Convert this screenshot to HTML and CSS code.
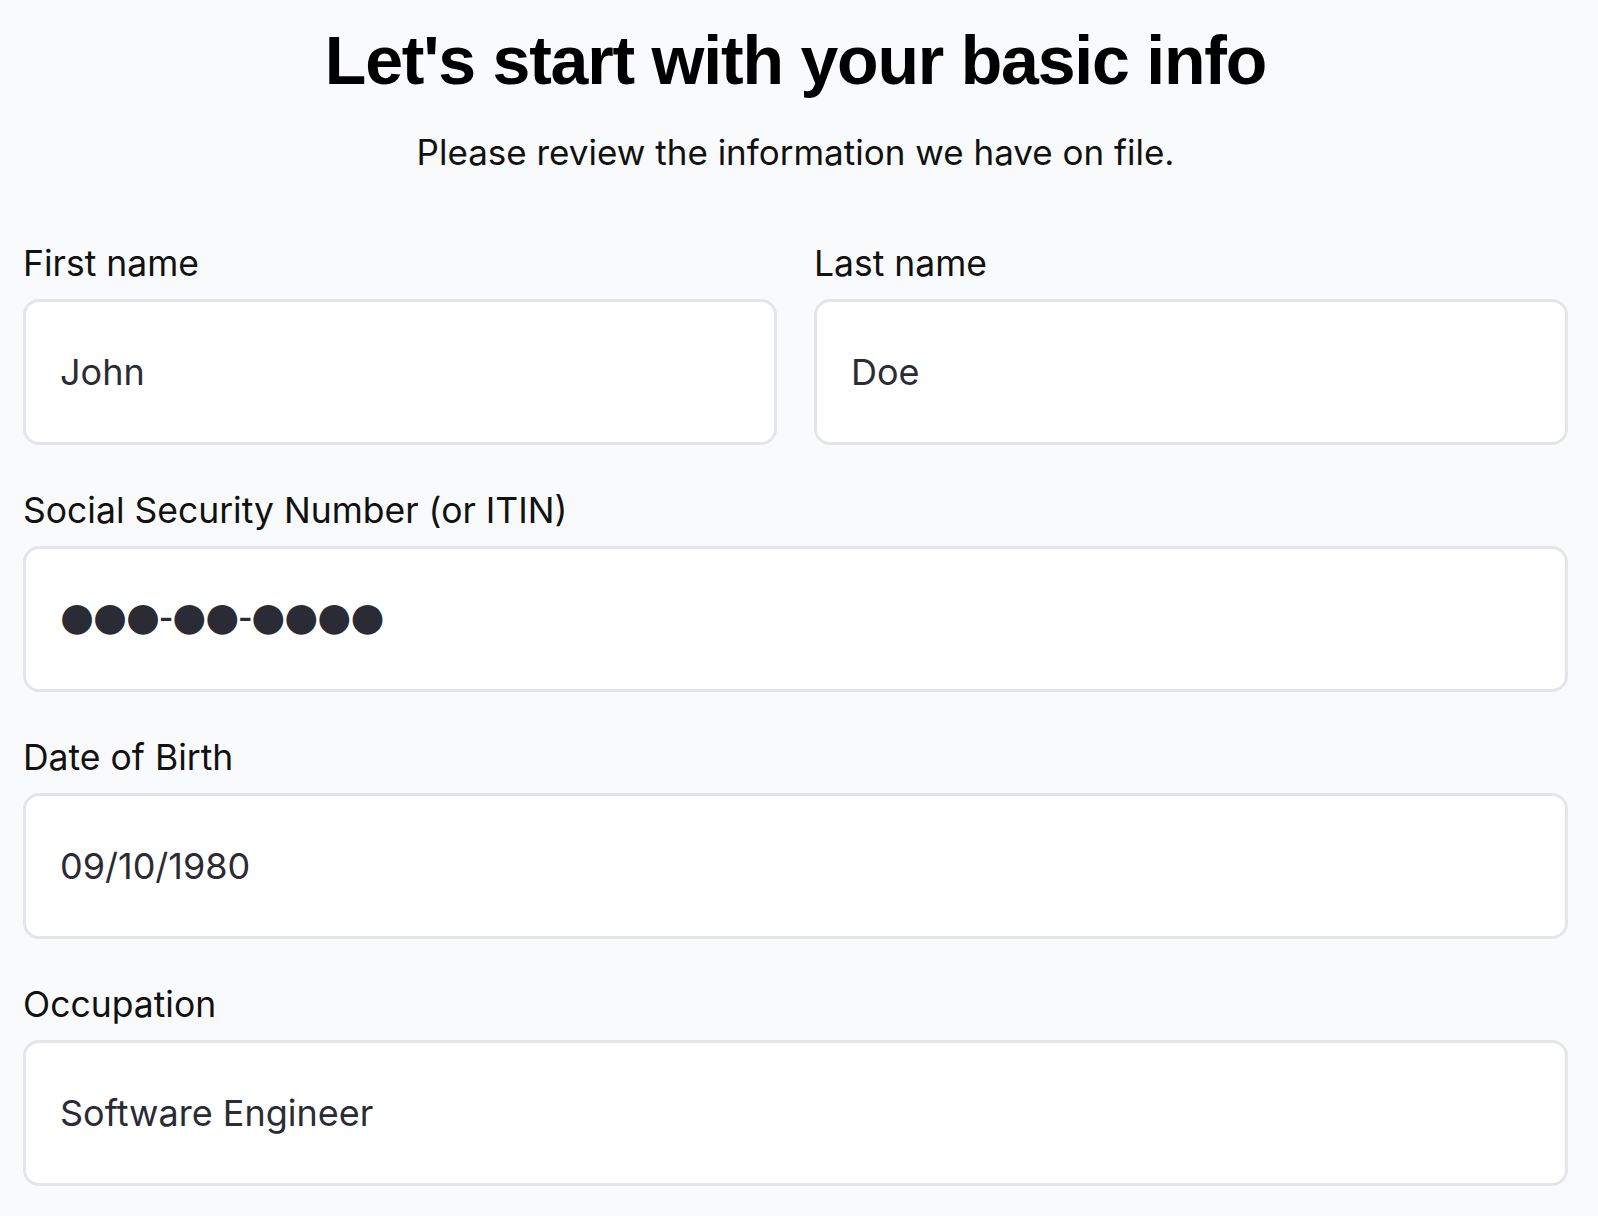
FILE: index.html
```html
<!DOCTYPE html>
<html lang="en">
<head>
    <meta charset="UTF-8">
    <meta name="viewport" content="width=device-width, initial-scale=1.0">
    <title>Basic Info</title>
    <link rel="stylesheet" href="styles.css">
</head>
<body>

<div class="container">
    <!-- Heading -->
    <div class="intro">
        <h1>Let's start with your basic info</h1>
        <p>Please review the information we have on file.</p>
    </div>

    <!-- Info Form -->
    <form class="info-form" id="infoForm">
        <div class="form-row">
            <div class="form-group">
                <label for="firstName">First name</label>
                <input type="text" id="firstName" value="John">
            </div>
            <div class="form-group">
                <label for="lastName">Last name</label>
                <input type="text" id="lastName" value="Doe">
            </div>
        </div>
        <div class="form-group">
            <label for="ssn">Social Security Number (or ITIN)</label>
            <div class="masked-field" id="ssn">●●●-●●-●●●●</div>
        </div>
        <div class="form-group">
            <label for="dob">Date of Birth</label>
            <input type="text" id="dob" value="09/10/1980">
        </div>
        <div class="form-group">
            <label for="occupation">Occupation</label>
            <input type="text" id="occupation" value="Software Engineer">
        </div>
    </form>
</div>

</body>
</html>
```

FILE: styles.css
```css
/* General Styling */
body {
    font-family: Inter, "Open Sans", sans-serif;
    background-color: #f9fafb;
    color: #111;
    margin: 0;
}
.container {
    width: 1545px;
    margin-left: 23px;
    padding-top: 20px;
}

/* Heading */
.intro {
    text-align: center;
}
.intro h1 {
    font-family: "Liberation Sans", Arial, sans-serif;
    font-size: 68px;
    font-weight: 700;
    line-height: 80px;
    letter-spacing: -1.2px;
    color: #000;
    margin: 0;
}
.intro p {
    font-size: 35px;
    line-height: 40px;
    margin: 32px 0 0;
}

/* Form Styling */
.info-form {
    margin-top: 72px;
    display: flex;
    flex-direction: column;
    gap: 46px;
}
.form-row {
    display: grid;
    grid-template-columns: 1fr 1fr;
    gap: 37px;
}
.form-group label {
    display: block;
    font-size: 35.5px;
    line-height: 40px;
    margin-bottom: 15px;
}
.form-group input,
.masked-field {
    display: flex;
    align-items: center;
    width: 100%;
    height: 146px;
    padding: 0 34px;
    font-family: inherit;
    font-size: 36px;
    color: #2b2b36;
    background-color: #ffffff;
    border: 3px solid #e4e5ea;
    border-radius: 16px;
    outline: none;
    box-sizing: border-box;
}
.masked-field {
    font-family: "DejaVu Sans", sans-serif;
    font-size: 39px;
    letter-spacing: -1px;
    padding-bottom: 6px;
}
```
